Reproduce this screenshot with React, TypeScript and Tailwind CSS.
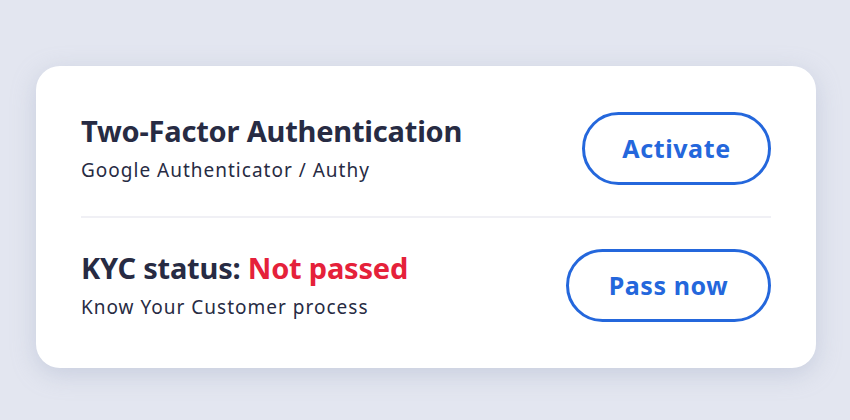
export default function App() {
  const rows = [
    {
      title: <>Two-Factor Authentication</>,
      sub: 'Google Authenticator / Authy',
      action: 'Activate',
      btn: 'w-[189px]',
    },
    {
      title: (
        <>
          KYC status: <span className="text-[#e5213a]">Not passed</span>
        </>
      ),
      sub: 'Know Your Customer process',
      action: 'Pass now',
      btn: 'w-[205px]',
    },
  ];

  return (
    <div
      className="w-[850px] h-[420px] bg-[#e3e6f0] pt-[66px] pl-[36px]"
      style={{ fontFamily: '"Noto Sans", sans-serif' }}
    >
      <div className="w-[780px] bg-white rounded-[24px] shadow-[0_6px_24px_rgba(150,160,190,0.35)] px-[45px] py-[46px]">
        {rows.map((row, i) => (
          <div
            key={i}
            className={
              i === 0
                ? 'flex items-center justify-between pb-[31px] border-b-2 border-[#f0f0f5]'
                : 'flex items-center justify-between pt-[31px]'
            }
          >
            <div className="-mt-[2px]">
              <div className="text-[29px] font-bold leading-[34px] tracking-[-0.2px] text-[#272b43]">{row.title}</div>
              <div className="mt-[10px] text-[19px] leading-[24px] tracking-[1px] text-[#272b43]">{row.sub}</div>
            </div>
            <button
              className={`${row.btn} h-[73px] rounded-full border-[3px] border-[#2467dc] text-[#2467dc] text-[25px] font-bold tracking-[0.6px]`}
            >
              {row.action}
            </button>
          </div>
        ))}
      </div>
    </div>
  );
}
